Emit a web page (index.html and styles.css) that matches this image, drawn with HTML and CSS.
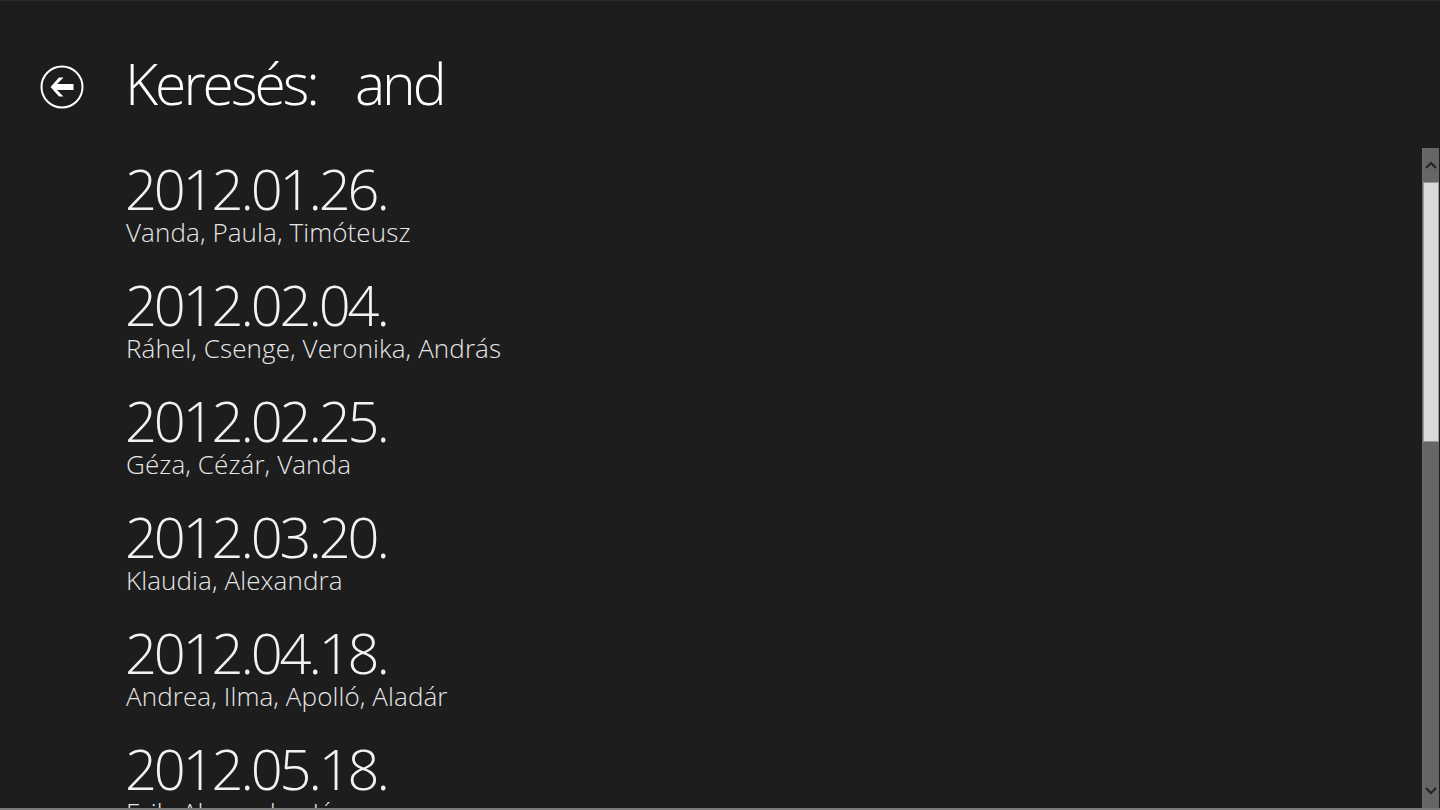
FILE: index.html
```html
<!DOCTYPE html>
<html lang="hu">
<head>
<meta charset="utf-8">
<title>Keresés: and</title>
<link rel="stylesheet" href="styles.css">
</head>
<body>
<div class="page">
  <header class="header">
    <button class="back" aria-label="Vissza">
      <svg width="44" height="44" viewBox="0 0 44 44">
        <circle cx="22" cy="22" r="20.5" fill="none" stroke="#ffffff" stroke-width="2"/>
        <polygon points="10.5,22 19,12.5 23.5,12.5 17,19 33.5,19 33.5,25 17,25 23.5,31.5 19,31.5" fill="#ffffff"/>
      </svg>
    </button>
    <h1 class="title"><span>Keresés:</span><span class="query">and</span></h1>
  </header>
  <div class="body">
    <ul class="results">
      <li class="item"><div class="date">2012.01.26.</div><div class="names">Vanda, Paula, Timóteusz</div></li>
      <li class="item"><div class="date">2012.02.04.</div><div class="names">Ráhel, Csenge, Veronika, András</div></li>
      <li class="item"><div class="date">2012.02.25.</div><div class="names">Géza, Cézár, Vanda</div></li>
      <li class="item"><div class="date">2012.03.20.</div><div class="names">Klaudia, Alexandra</div></li>
      <li class="item"><div class="date">2012.04.18.</div><div class="names">Andrea, Ilma, Apolló, Aladár</div></li>
      <li class="item"><div class="date">2012.05.18.</div><div class="names">Erik, Alexandra, János</div></li>
    </ul>
    <div class="scrollbar">
      <div class="sb-btn"><svg width="12" height="8" viewBox="0 0 12 8"><polyline points="1,7 6,2 11,7" fill="none" stroke="#222" stroke-width="2"/></svg></div>
      <div class="sb-thumb"></div>
      <div class="sb-track"></div>
      <div class="sb-btn"><svg width="12" height="8" viewBox="0 0 12 8"><polyline points="1,1 6,6 11,1" fill="none" stroke="#222" stroke-width="2"/></svg></div>
    </div>
  </div>
</div>
</body>
</html>
```
FILE: styles.css
```css
html, body {
  margin: 0;
  padding: 0;
  background: #1d1d1d;
}
body {
  width: 1440px;
  height: 810px;
  overflow: hidden;
  font-family: "Open Sans", "Noto Sans", sans-serif;
  font-weight: 300;
  color: #ffffff;
}
.page {
  display: flex;
  flex-direction: column;
  border-top: 1px solid #2a2a2a;
  border-bottom: 2px solid #7a7a7a;
  box-sizing: border-box;
  height: 810px;
}
.header {
  height: 147px;
  display: flex;
  align-items: flex-start;
  flex-shrink: 0;
}
.back {
  margin: 64px 0 0 40px;
  padding: 0;
  width: 44px;
  height: 44px;
  border: none;
  background: none;
  display: block;
}
.back svg { display: block; }
.title {
  margin: 46px 0 0 41px;
  font-size: 57px;
  font-weight: 300;
  line-height: 72px;
  color: #ffffff;
  letter-spacing: -3px;
  display: flex;
  gap: 38px;
}
.body {
  flex: 1;
  display: flex;
  min-height: 0;
}
.results {
  flex: 1;
  list-style: none;
  margin: 0;
  padding: 0 0 0 125px;
  overflow: hidden;
}
.item {
  height: 116px;
}
.date {
  font-size: 56px;
  line-height: 58px;
  padding-top: 11px;
  letter-spacing: -3.1px;
  color: #f2f2f2;
}
.names {
  font-size: 26px;
  line-height: 26px;
  margin-top: 2px;
  color: #e6e6e6;
  padding-left: 1px;
  letter-spacing: 0.1px;
}
.scrollbar {
  width: 17px;
  margin-right: 1px;
  background: #666666;
  border-left: 1px solid #6e6e6e;
  box-sizing: border-box;
  display: flex;
  flex-direction: column;
  flex-shrink: 0;
}
.sb-btn {
  height: 34px;
  display: flex;
  align-items: center;
  justify-content: center;
  flex-shrink: 0;
}
.sb-thumb {
  height: 258px;
  background: #d9d9d9;
  border: 1px solid #9a9a9a;
  flex-shrink: 0;
}
.sb-track { flex: 1; }
```
